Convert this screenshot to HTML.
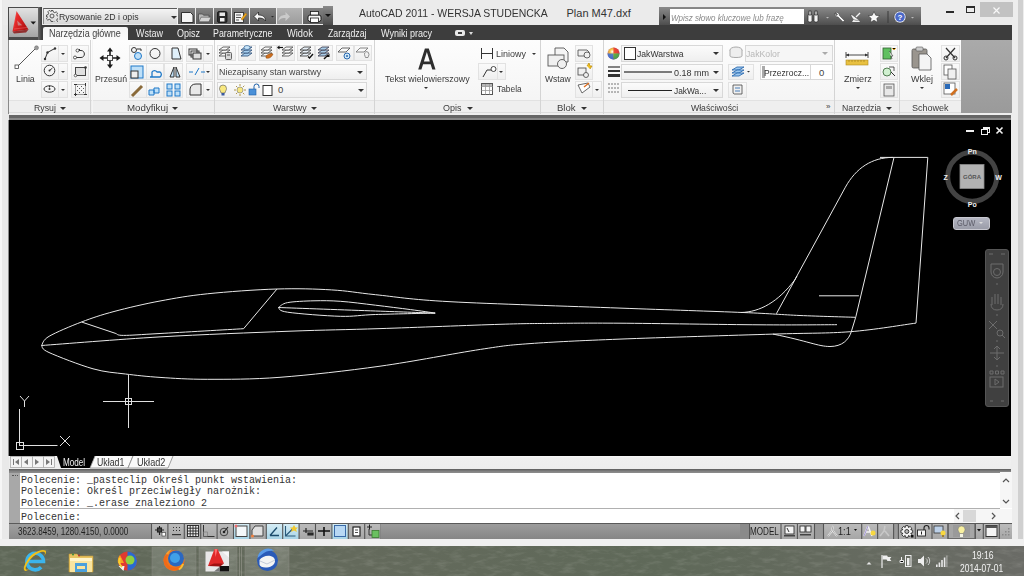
<!DOCTYPE html>
<html><head><meta charset="utf-8">
<style>
*{box-sizing:border-box}
html,body{margin:0;padding:0}
body{width:1024px;height:576px;overflow:hidden;position:relative;background:#ebebeb;font-family:"Liberation Sans",sans-serif;color:#333}
.a{position:absolute}
.t{position:absolute;white-space:pre;font-size:10px;letter-spacing:-0.5px;color:#3b3b3b;line-height:12px}
.btn{position:absolute;border:1px solid #e2e2e2;background:linear-gradient(#fafafa,#efefef)}
.dd{position:absolute;border:1px solid #d8d8d8;background:linear-gradient(#fbfbfb,#efefef)}
.arr{position:absolute;width:0;height:0;border-left:3px solid transparent;border-right:3px solid transparent;border-top:3px solid #333}
.ptitle{position:absolute;top:100px;height:12px;background:#efefef;border-top:1px solid #e2e2e2}
.psep{position:absolute;top:40px;height:74px;width:1px;background:#d4d4d4}
.sb{position:absolute;top:523px;height:16px;width:16px;border-left:1px solid #8c8c8c;border-right:1px solid #d0d0d0}
</style></head><body>

<!-- left strip -->
<div class="a" style="left:0;top:0;width:2px;height:545px;background:#f6f6f6"></div>
<div class="a" style="left:2px;top:0;width:7px;height:545px;background:#e9e9e9"></div>
<div class="a" style="left:8px;top:120px;width:1px;height:336px;background:#8a8a8a"></div>
<div class="a" style="left:8px;top:40px;width:1px;height:74px;background:#8a8a8a"></div>
<!-- right strip -->
<div class="a" style="left:1011px;top:0;width:13px;height:545px;background:#ededed"></div>
<div class="a" style="left:1018px;top:0;width:5px;height:545px;background:#d0d0d0"></div>

<!-- top title area -->
<div class="a" style="left:3px;top:0;width:1009px;height:25px;background:#ebebeb"></div>

<!-- tab row -->
<div class="a" style="left:9px;top:25px;width:1003px;height:15px;background:#3d3d3d"></div>
<div class="a" style="left:43px;top:27px;width:85px;height:14px;background:linear-gradient(#f4f4f4,#fbfbfb);border-radius:2px 2px 0 0"></div>
<div class="t" style="left:48.90px;top:29.24px;font-size:10px;line-height:10px;letter-spacing:0;transform:scaleX(0.903);transform-origin:0 0;color:#444">Narzędzia główne</div>
<div class="t" style="left:135.50px;top:29.24px;font-size:10px;line-height:10px;letter-spacing:0;transform:scaleX(0.900);transform-origin:0 0;color:#f0f0f0">Wstaw</div>
<div class="t" style="left:176.60px;top:29.24px;font-size:10px;line-height:10px;letter-spacing:0;transform:scaleX(0.896);transform-origin:0 0;color:#f0f0f0">Opisz</div>
<div class="t" style="left:213.32px;top:29.24px;font-size:10px;line-height:10px;letter-spacing:0;transform:scaleX(0.883);transform-origin:0 0;color:#f0f0f0">Parametryczne</div>
<div class="t" style="left:287.00px;top:29.24px;font-size:10px;line-height:10px;letter-spacing:0;transform:scaleX(0.929);transform-origin:0 0;color:#f0f0f0">Widok</div>
<div class="t" style="left:327.70px;top:29.24px;font-size:10px;line-height:10px;letter-spacing:0;transform:scaleX(0.877);transform-origin:0 0;color:#f0f0f0">Zarządzaj</div>
<div class="t" style="left:380.50px;top:29.24px;font-size:10px;line-height:10px;letter-spacing:0;transform:scaleX(0.902);transform-origin:0 0;color:#f0f0f0">Wyniki pracy</div>
<div class="a" style="left:455px;top:30px;width:10px;height:6px;background:#e8e8e8;border-radius:2px"></div>
<div class="a" style="left:458px;top:32px;width:4px;height:2px;background:#3d3d3d"></div>
<div class="arr" style="left:469px;top:32px;border-top-color:#ddd;border-left-width:2px;border-right-width:2px"></div>

<!-- app button -->
<div class="a" style="left:8px;top:7px;width:34px;height:33px;background:#4a4a4a"></div>
<div class="a" style="left:38px;top:7px;width:4px;height:33px;background:linear-gradient(90deg,#6a6a6a,#3a3a3a)"></div>
<div class="a" style="left:9px;top:8px;width:29px;height:29px;background:linear-gradient(#e2e2e2,#c8c8c8 45%,#a4a4a4 100%)"></div>
<svg class="a" style="left:9px;top:8px" width="29" height="29" viewBox="0 0 29 29">
 <defs><linearGradient id="ra" x1="0" y1="0" x2="1" y2="0.6"><stop offset="0" stop-color="#f07070"/><stop offset="0.35" stop-color="#e82a2a"/><stop offset="1" stop-color="#b01010"/></linearGradient></defs>
 <path d="M3.5 23.5 L7.5 3 L19.5 21.5 Z" fill="url(#ra)"/>
 <path d="M3.5 23.5 L19.5 21.5 L17 24.5 L5 25.5 Z" fill="#8a1010" opacity=".8"/>
 <path d="M8.2 12.5 L8.9 17.6 L13.2 17.2 Z" fill="#c8c8c8" opacity=".55"/><path d="M5 21 L18 19.5" stroke="#ff8080" stroke-width="0.8" opacity=".5"/>
 <path d="M4.5 22 L7.5 3.5 L6 14 Z" fill="#ffb0b0" opacity=".6"/>
 <path d="M21.5 13.5h5.5l-2.75 3z" fill="#1a1a1a"/>
</svg>

<!-- QAT -->
<div class="a" style="left:43px;top:8px;width:134px;height:16px;background:linear-gradient(#f4f4f4,#d6d6d6);border-top:1px solid #5a5a5a;border-left:1px solid #8a8a8a"></div>
<svg class="a" style="left:46px;top:10px" width="12" height="12" viewBox="0 0 12 12"><g fill="none" stroke="#555" stroke-width="1"><circle cx="6" cy="6" r="2"/><path d="M5 0.5h2l.4 1.6 1.4.6 1.4-.9 1.4 1.4-.9 1.4.6 1.4 1.6.4v2l-1.6.4-.6 1.4.9 1.4-1.4 1.4-1.4-.9-1.4.6L7 11.5H5l-.4-1.6-1.4-.6-1.4.9-1.4-1.4.9-1.4-.6-1.4L.5 7V5l1.6-.4.6-1.4-.9-1.4 1.4-1.4 1.4.9 1.4-.6z"/></g></svg>
<div class="t" style="left:58.58px;top:11.96px;font-size:9.5px;line-height:9.5px;letter-spacing:0;transform:scaleX(0.924);transform-origin:0 0;color:#333">Rysowanie 2D i opis</div>
<div class="arr" style="left:171px;top:16px;border-width:3px 3px 0 3px;border-top-color:#333"></div>
<div class="a" style="left:177px;top:8px;width:1px;height:17px;background:#f4f4f4"></div>
<div class="a" style="left:178px;top:8px;width:17px;height:16px;background:linear-gradient(#828282,#5e5e5e)"></div>
<div class="a" style="left:196px;top:8px;width:17px;height:16px;background:linear-gradient(#828282,#5e5e5e)"></div>
<div class="a" style="left:214px;top:8px;width:17px;height:16px;background:linear-gradient(#828282,#5e5e5e)"></div>
<div class="a" style="left:232px;top:8px;width:17px;height:16px;background:linear-gradient(#828282,#5e5e5e)"></div>
<div class="a" style="left:250px;top:8px;width:26px;height:16px;background:linear-gradient(#828282,#5e5e5e)"></div>
<div class="a" style="left:277px;top:8px;width:25px;height:16px;background:linear-gradient(#b4b4b4,#9c9c9c)"></div>
<div class="a" style="left:303px;top:8px;width:20px;height:16px;background:linear-gradient(#828282,#5e5e5e)"></div>
<div class="a" style="left:323px;top:6px;width:10px;height:19px;background:linear-gradient(#8a8a8a,#4a4a4a)"></div>
<div class="arr" style="left:325px;top:14px;border-width:3px 3px 0 3px;border-top-color:#111"></div>
<!-- QAT icons -->
<svg class="a" style="left:178px;top:8px" width="160" height="17" viewBox="0 0 160 17">
 <!-- new -->
 <path d="M3.5 4.5h9l2.5 2.5v7.5H3.5z" fill="#f6f6f6" stroke="#222" stroke-width="0.9"/>
 <!-- open -->
 <path d="M20.5 6h4l1 1.2h5.5v6.5H20.5z" fill="#b8b8b8" stroke="#444" stroke-width="0.7"/>
 <path d="M21 13.7l2-4.5h10l-2 4.5z" fill="#d4d4d4" stroke="#555" stroke-width="0.6"/>
 <!-- save -->
 <rect x="39.5" y="3.5" width="9.5" height="11" rx="1.5" fill="#2a2a2a" stroke="#111" stroke-width="0.8"/>
 <rect x="41.5" y="4.5" width="5.5" height="3.5" fill="#e8e8e8"/>
 <rect x="42" y="10" width="4.5" height="3.5" fill="#f0f0f0"/>
 <!-- saveas -->
 <rect x="56.5" y="4.5" width="9" height="10" fill="#f4f4f4" stroke="#222" stroke-width="0.8"/>
 <path d="M58 7h5M58 9.5h5M58 12h3" stroke="#444" stroke-width="0.9"/>
 <path d="M63 11l4.5-6 1.5 1.2-4.5 6z" fill="#f0a818" stroke="#8a5a10" stroke-width="0.4"/>
 <!-- undo -->
 <path d="M76 8.5 l4.5-4.5 v3 c4.5 0 7 2 7 6 c-1.5-2.5-4-3-7-3 v3z" fill="#f8f8f8" stroke="#1a1a1a" stroke-width="0.7"/>
 <path d="M93 8h3l-1.5 1.6z" fill="#2a2a2a"/>
 <!-- redo disabled -->
 <path d="M112 8.5 l-4.5-4.5 v3 c-4.5 0-7 2-7 6 c1.5-2.5 4-3 7-3 v3z" fill="#cacaca"/>
 <path d="M118 8h3l-1.5 1.6z" fill="#a8a8a8"/>
 <!-- print -->
 <rect x="130" y="7" width="13" height="6.5" rx="2" fill="#f6f6f6" stroke="#1a1a1a" stroke-width="1"/>
 <rect x="132.5" y="3.5" width="8" height="3.5" fill="#f6f6f6" stroke="#1a1a1a" stroke-width="0.8"/>
 <rect x="132.5" y="10" width="8" height="4.5" fill="#fff" stroke="#1a1a1a" stroke-width="0.8"/>
</svg>

<!-- title -->
<div class="t" style="left:359.00px;top:8.29px;font-size:11px;line-height:11px;letter-spacing:0;transform:scaleX(0.951);transform-origin:0 0;color:#333">AutoCAD 2011 - WERSJA STUDENCKA</div>
<div class="t" style="left:566.50px;top:8.29px;font-size:11px;line-height:11px;letter-spacing:0;color:#333">Plan M47.dxf</div>

<!-- search bar -->
<div class="a" style="left:659px;top:7px;width:262px;height:18px;background:linear-gradient(#8a8a8a,#4e4e4e)"></div>
<div class="arr" style="left:663px;top:14px;border-top:3px solid transparent;border-bottom:3px solid transparent;border-left:3px solid #111;border-right:0"></div>
<div class="a" style="left:670px;top:9px;width:134px;height:15px;background:#fff"></div>
<div class="t" style="left:670.76px;top:12.96px;font-size:9.5px;line-height:9.5px;letter-spacing:0;transform:scaleX(0.844);transform-origin:0 0;font-style:italic;color:#8a8a8a">Wpisz słowo kluczowe lub frazę</div>
<svg class="a" style="left:804px;top:8px" width="117" height="18" viewBox="0 0 117 18">
 <!-- binoculars -->
 <g fill="#f4f4f4" stroke="#222" stroke-width="0.7"><rect x="4" y="6" width="4" height="8" rx="1.5"/><rect x="10" y="6" width="4" height="8" rx="1.5"/><rect x="5" y="3" width="2" height="4"/><rect x="11" y="3" width="2" height="4"/></g>
 <path d="M22 9h3l-1.5 1.5z" fill="#bbb"/>
 <!-- wrench -->
 <path d="M31 5 a3 3 0 0 0 3 4 l5 5 1.5-1.5-5-5 a3 3 0 0 0-4-3 l2 2-1 1z" fill="#f4f4f4" stroke="#333" stroke-width="0.5"/>
 <!-- satellite -->
 <path d="M48 14h8l-2-3h-4z" fill="#f0f0f0"/>
 <path d="M47 6a6 6 0 0 0 8 6z" fill="#f4f4f4" stroke="#333" stroke-width="0.5"/>
 <path d="M52 9l4-4" stroke="#f4f4f4" stroke-width="1.2"/>
 <!-- star -->
 <path d="M70 3.5l1.8 3.8 4 .4-3 2.7.9 4-3.7-2.1-3.7 2.1.9-4-3-2.7 4-.4z" fill="#f8f8f8" stroke="#333" stroke-width="0.6"/>
 <path d="M84 3v12" stroke="#3a3a3a"/>
 <!-- help -->
 <circle cx="96" cy="9" r="6" fill="#f4f4f4" stroke="#333" stroke-width="0.5"/>
 <circle cx="96" cy="9" r="4.8" fill="#4a68c8"/>
 <text x="96" y="12" font-size="8" font-weight="bold" text-anchor="middle" fill="#fff" font-family="Liberation Sans">?</text>
 <path d="M107 9h3l-1.5 1.5z" fill="#bbb"/>
</svg>

<!-- window controls -->
<div class="a" style="left:946px;top:11px;width:8px;height:2px;background:#2a2a2a"></div>
<div class="a" style="left:966px;top:6px;width:9px;height:7px;border:1px solid #2a2a2a;border-top-width:2px"></div>
<div class="a" style="left:980px;top:2px;width:33px;height:15px;background:#c2c2c2"></div>
<svg class="a" style="left:992px;top:6px" width="9" height="9" viewBox="0 0 9 9"><path d="M1.5 1.5L7.5 7.5M7.5 1.5L1.5 7.5" stroke="#f8f8f8" stroke-width="1.2"/></svg>

<!-- ribbon body -->
<div class="a" style="left:9px;top:40px;width:952px;height:74px;background:linear-gradient(#fdfdfd,#f3f3f3)"></div>
<div class="a" style="left:961px;top:40px;width:51px;height:74px;background:linear-gradient(#aaaaaa,#9a9a9a)"></div>
<div class="a" style="left:9px;top:112px;width:952px;height:1px;background:#dcdcdc"></div>
<div class="a" style="left:9px;top:113px;width:1003px;height:2px;background:#eeeeee"></div>
<!-- panel title bars -->
<div class="ptitle" style="left:9px;width:952px"></div>
<div class="psep" style="left:90px"></div><div class="psep" style="left:92px;background:#f4f4f4"></div>
<div class="psep" style="left:214px"></div>
<div class="psep" style="left:374px"></div>
<div class="psep" style="left:540px"></div>
<div class="psep" style="left:603px"></div>
<div class="psep" style="left:834px"></div>
<div class="psep" style="left:899px"></div>
<div class="t" style="left:34.08px;top:102.56px;font-size:9.5px;line-height:9.5px;letter-spacing:0;transform:scaleX(0.923);transform-origin:0 0">Rysuj</div><div class="arr" style="left:60px;top:107px"></div>
<div class="t" style="left:126.68px;top:102.56px;font-size:9.5px;line-height:9.5px;letter-spacing:0;transform:scaleX(1.023);transform-origin:0 0">Modyfikuj</div><div class="arr" style="left:172px;top:107px"></div>
<div class="t" style="left:272.80px;top:102.56px;font-size:9.5px;line-height:9.5px;letter-spacing:0;transform:scaleX(0.931);transform-origin:0 0">Warstwy</div><div class="arr" style="left:311px;top:107px"></div>
<div class="t" style="left:443.00px;top:102.56px;font-size:9.5px;line-height:9.5px;letter-spacing:0;transform:scaleX(0.942);transform-origin:0 0">Opis</div><div class="arr" style="left:467px;top:107px"></div>
<div class="t" style="left:557.49px;top:102.56px;font-size:9.5px;line-height:9.5px;letter-spacing:0;transform:scaleX(1.006);transform-origin:0 0">Blok</div><div class="arr" style="left:581px;top:107px"></div>
<div class="t" style="left:691.40px;top:102.56px;font-size:9.5px;line-height:9.5px;letter-spacing:0;transform:scaleX(0.914);transform-origin:0 0">Właściwości</div>
<div class="t" style="left:826px;top:101px;font-size:8px;letter-spacing:0">»</div>
<div class="t" style="left:842.08px;top:102.56px;font-size:9.5px;line-height:9.5px;letter-spacing:0;transform:scaleX(0.917);transform-origin:0 0">Narzędzia</div><div class="arr" style="left:886px;top:107px"></div>
<div class="t" style="left:912.35px;top:102.56px;font-size:9.5px;line-height:9.5px;letter-spacing:0;transform:scaleX(0.949);transform-origin:0 0">Schowek</div>

<!-- ===== Rysuj ===== -->
<svg class="a" style="left:14px;top:45px" width="26" height="25" viewBox="0 0 26 25"><path d="M3 22L22 3" stroke="#555" stroke-width="1"/><rect x="1" y="20" width="3.5" height="3.5" fill="#fff" stroke="#444" stroke-width="0.8"/><circle cx="22.5" cy="2.8" r="2" fill="#999" stroke="#666" stroke-width="0.5"/></svg>
<div class="t" style="left:16.26px;top:74.46px;font-size:9.5px;line-height:9.5px;letter-spacing:0;transform:scaleX(0.937);transform-origin:0 0">Linia</div>
<div class="btn" style="left:41px;top:45px;width:18px;height:17px"></div><div class="btn" style="left:58px;top:45px;width:10px;height:17px"></div>
<div class="btn" style="left:41px;top:63px;width:18px;height:17px"></div><div class="btn" style="left:58px;top:63px;width:10px;height:17px"></div>
<div class="btn" style="left:41px;top:81px;width:18px;height:17px"></div><div class="btn" style="left:58px;top:81px;width:10px;height:17px"></div>
<div class="btn" style="left:71px;top:45px;width:18px;height:17px"></div>
<div class="btn" style="left:71px;top:63px;width:18px;height:17px"></div>
<div class="btn" style="left:71px;top:81px;width:18px;height:17px"></div>
<div class="arr" style="left:61px;top:53px;border-width:2px 2px 0 2px"></div>
<div class="arr" style="left:61px;top:71px;border-width:2px 2px 0 2px"></div>
<div class="arr" style="left:61px;top:89px;border-width:2px 2px 0 2px"></div>
<svg class="a" style="left:41px;top:45px" width="50" height="53" viewBox="0 0 50 53">
 <g fill="none" stroke="#333" stroke-width="1">
 <path d="M4 14 L6.5 7.5 L11 5 L14 3.5"/>
 <circle cx="8.5" cy="25.5" r="5.3"/><path d="M8.5 25.5l3-2.5"/>
 <ellipse cx="8.5" cy="44" rx="5.5" ry="3.2"/><path d="M8.5 40.5v2"/>
 <path d="M35 12.5 H40 C44.5 12.5 44.5 5.5 40 5.5 H37.5"/><path d="M37.5 5.5 l1.5-1.5"/>
 <rect x="34.5" y="22.5" width="10" height="8" fill="#e0e0e0" stroke="#444"/>
 <rect x="34.5" y="39.5" width="10" height="10" fill="none" stroke="#444" stroke-dasharray="1 1"/>
 </g>
 <g fill="#333"><circle cx="4" cy="14" r="1.2"/><circle cx="6.5" cy="7.5" r="1.2"/><circle cx="14" cy="3.5" r="1.2"/><circle cx="8.5" cy="25.5" r="1"/><circle cx="8.5" cy="44" r="1"/>
 <circle cx="34" cy="12.5" r="1.5" fill="#fff" stroke="#333" stroke-width="0.8"/><circle cx="36.5" cy="5.5" r="1.5" fill="#fff" stroke="#333" stroke-width="0.8"/>
 <circle cx="34.5" cy="30.5" r="1.3" fill="#fff" stroke="#333" stroke-width="0.7"/><circle cx="44.5" cy="22.5" r="1.3" fill="#333"/>
 <path d="M36 41h1v1h-1zM38 43h1v1h-1zM40 41h1v1h-1zM42 43h1v1h-1zM36 45h1v1h-1zM40 45h1v1h-1zM38 47h1v1h-1zM42 47h1v1h-1z" fill="#555"/>
 <path d="M33 49.5h3M43 49.5h3M33 39.5h3M44.5 38v3M34.5 48v3" stroke="#333" stroke-width="1"/>
 </g>
</svg>

<!-- ===== Modyfikuj ===== -->
<svg class="a" style="left:99px;top:47px" width="22" height="22" viewBox="0 0 22 22">
 <g fill="#1a1a1a"><path d="M11 0.5l3 4h-6z"/><path d="M11 21.5l3-4h-6z"/><path d="M0.5 11l4-3v6z"/><path d="M21.5 11l-4-3v6z"/></g>
 <path d="M11 4v4M11 14v4M4 11h4M14 11h4" stroke="#1a1a1a" stroke-width="1.6"/>
 <rect x="8.5" y="8.5" width="5" height="5" fill="#f4f4f4" stroke="#333" stroke-width="0.9"/>
</svg>
<div class="t" style="left:94.78px;top:74.46px;font-size:9.5px;line-height:9.5px;letter-spacing:0;transform:scaleX(0.918);transform-origin:0 0">Przesuń</div>
<div class="btn" style="left:129px;top:45px;width:18px;height:17px"></div><div class="btn" style="left:146px;top:45px;width:18px;height:17px"></div><div class="btn" style="left:164px;top:45px;width:19px;height:17px"></div>
<div class="btn" style="left:129px;top:63px;width:18px;height:17px"></div><div class="btn" style="left:146px;top:63px;width:18px;height:17px"></div><div class="btn" style="left:164px;top:63px;width:19px;height:17px"></div>
<div class="btn" style="left:129px;top:81px;width:18px;height:17px"></div><div class="btn" style="left:146px;top:81px;width:18px;height:17px"></div><div class="btn" style="left:164px;top:81px;width:19px;height:17px"></div>
<div class="btn" style="left:186px;top:45px;width:18px;height:17px"></div><div class="btn" style="left:203px;top:45px;width:10px;height:17px"></div>
<div class="btn" style="left:186px;top:63px;width:18px;height:17px"></div><div class="btn" style="left:203px;top:63px;width:10px;height:17px"></div>
<div class="btn" style="left:186px;top:81px;width:18px;height:17px"></div><div class="btn" style="left:203px;top:81px;width:10px;height:17px"></div>
<div class="arr" style="left:206px;top:53px;border-width:2px 2px 0 2px"></div>
<div class="arr" style="left:206px;top:71px;border-width:2px 2px 0 2px"></div>
<div class="arr" style="left:206px;top:89px;border-width:2px 2px 0 2px"></div>
<svg class="a" style="left:129px;top:45px" width="80" height="53" viewBox="0 0 80 53">
 <g fill="none" stroke-width="1">
 <circle cx="5" cy="5" r="2.5" stroke="#333"/><circle cx="9" cy="11" r="3.5" stroke="#1e78c8" fill="#bfe0f8"/><path d="M8 4h4v2" stroke="#333"/>
 <circle cx="26" cy="8.5" r="5" stroke="#333"/>
 <path d="M43 3h6l3 11h-9z" stroke="#333" fill="#e0f0fa"/>
 <rect x="2" y="21" width="12" height="12" stroke="#1e78c8" fill="#bfe0f8"/><rect x="2" y="26" width="7" height="7" stroke="#333" fill="#eee"/>
 <path d="M21 32h10a3 3 0 0 0 0-5h-3a3 3 0 0 0-5 0v5" stroke="#1e78c8" stroke-width="1.3"/>
 <path d="M41 32l4-10v10z M47 22l4 10h-4z" stroke="#333" fill="#bfe0f8"/>
 <path d="M3 51l10-10" stroke="#8a6a3a" stroke-width="3"/>
 <path d="M20 45h5v5h-5zM25 43h5v5h-5z" stroke="#1e78c8" fill="#bfe0f8"/>
 <rect x="38" y="39" width="5" height="5" stroke="#1e78c8" fill="#bfe0f8"/><rect x="46" y="39" width="5" height="5" stroke="#1e78c8" fill="#bfe0f8"/><rect x="38" y="46" width="5" height="5" stroke="#1e78c8" fill="#bfe0f8"/><rect x="46" y="46" width="5" height="5" stroke="#1e78c8" fill="#bfe0f8"/>
 <rect x="60" y="4" width="8" height="6" stroke="#333"/><rect x="62" y="6" width="8" height="6" stroke="#333"/><rect x="64" y="8" width="8" height="6" stroke="#333" fill="#ddd"/>
 <path d="M60 27h4M66 30l4-7M72 27h4" stroke="#1e78c8"/>
 <path d="M61 50v-6a6 6 0 0 1 6-5h5v11z" stroke="#333" fill="#e8e8e8"/>
 </g>
</svg>

<!-- ===== Warstwy ===== -->
<div class="btn" style="left:217px;top:45px;width:19px;height:16px"></div>
<div class="btn" style="left:238px;top:45px;width:18px;height:16px"></div>
<div class="btn" style="left:259px;top:45px;width:18px;height:16px"></div><div class="btn" style="left:277px;top:45px;width:18px;height:16px"></div>
<div class="btn" style="left:297px;top:45px;width:18px;height:16px"></div><div class="btn" style="left:315px;top:45px;width:18px;height:16px"></div>
<div class="btn" style="left:336px;top:45px;width:18px;height:16px"></div><div class="btn" style="left:354px;top:45px;width:18px;height:16px"></div>
<svg class="a" style="left:216px;top:44px" width="160" height="17" viewBox="0 0 160 17"><path d="M3,12 L7,9 H14 L10,12 Z" fill="#fafafa" stroke="#555" stroke-width="0.9"/><path d="M3,9 L7,6 H14 L10,9 Z" fill="#fafafa" stroke="#555" stroke-width="0.9"/><path d="M3,6 L7,3 H14 L10,6 Z" fill="#fafafa" stroke="#555" stroke-width="0.9"/><rect x="9.5" y="8.5" width="6" height="7" rx="1" fill="#d8d8d8" stroke="#555" stroke-width="0.9"/><path d="M11 11h3" stroke="#555"/><path d="M25,12 L29,9 H36 L32,12 Z" fill="#a8d0f0" stroke="#3a5a80" stroke-width="0.9"/><path d="M25,9 L29,6 H36 L32,9 Z" fill="#a8d0f0" stroke="#3a5a80" stroke-width="0.9"/><path d="M25,6 L29,3 H36 L32,6 Z" fill="#a8d0f0" stroke="#3a5a80" stroke-width="0.9"/><ellipse cx="31" cy="3.5" rx="3" ry="2" fill="#c8e4f8" stroke="#3a6a9a" stroke-width="0.7"/><path d="M45,12 L49,9 H56 L52,12 Z" fill="#fafafa" stroke="#555" stroke-width="0.9"/><path d="M45,9 L49,6 H56 L52,9 Z" fill="#fafafa" stroke="#555" stroke-width="0.9"/><path d="M45,6 L49,3 H56 L52,6 Z" fill="#fafafa" stroke="#555" stroke-width="0.9"/><path d="M50 12 c2-2 5-3 7-2 c-1 3-4 5-7 4z" fill="#d07020" stroke="#8a4a10" stroke-width="0.5"/><path d="M66,12 L70,9 H77 L73,12 Z" fill="#fafafa" stroke="#555" stroke-width="0.9"/><path d="M66,9 L70,6 H77 L73,9 Z" fill="#fafafa" stroke="#555" stroke-width="0.9"/><path d="M66,6 L70,3 H77 L73,6 Z" fill="#fafafa" stroke="#555" stroke-width="0.9"/><path d="M62 3.5h5" stroke="#111" stroke-width="1.2"/><path d="M61 3.5l2.5-2v4z" fill="#111"/><path d="M84,12 L88,9 H95 L91,12 Z" fill="#e8f0f8" stroke="#444" stroke-width="0.9"/><path d="M84,9 L88,6 H95 L91,9 Z" fill="#e8f0f8" stroke="#444" stroke-width="0.9"/><path d="M84,6 L88,3 H95 L91,6 Z" fill="#e8f0f8" stroke="#444" stroke-width="0.9"/><path d="M92 12.5l1.5 1.5 3.5-4" fill="none" stroke="#111" stroke-width="1.4"/><path d="M102,12 L106,9 H113 L109,12 Z" fill="#a8cce8" stroke="#445" stroke-width="0.9"/><path d="M102,9 L106,6 H113 L109,9 Z" fill="#a8cce8" stroke="#445" stroke-width="0.9"/><path d="M102,6 L106,3 H113 L109,6 Z" fill="#a8cce8" stroke="#445" stroke-width="0.9"/><path d="M108 15l4-4" stroke="#111" stroke-width="1.4"/><path d="M113.5 9.5v3.5h-3.5z" fill="#111"/><path d="M122,8 L126,4 H134 L130,8 Z" fill="#fafafa" stroke="#555" stroke-width="0.9"/><circle cx="131" cy="12" r="3" fill="#d0e8f8" stroke="#2a6ab0" stroke-width="1"/><circle cx="131" cy="12" r="1" fill="#2a6ab0"/><path d="M140,8 L144,4 H152 L148,8 Z" fill="#fafafa" stroke="#777" stroke-width="0.9"/><path d="M150 7.5a3 3 0 0 1 3 3c0 1.5-1 2-1 3h-2.5c0-1-1-1.5-1-3a3 3 0 0 1 1.5-3z" fill="#f0f0f0" stroke="#777" stroke-width="0.8"/></svg>
<div class="dd" style="left:217px;top:64px;width:150px;height:16px"></div>
<div class="t" style="left:218.67px;top:67.46px;font-size:9.5px;line-height:9.5px;letter-spacing:0;transform:scaleX(0.934);transform-origin:0 0;color:#444">Niezapisany stan warstwy</div>
<div class="arr" style="left:357px;top:71px;border-width:3px 3.5px 0 3.5px"></div>
<div class="dd" style="left:217px;top:82px;width:150px;height:16px"></div>
<svg class="a" style="left:219px;top:83px" width="70" height="14" viewBox="0 0 70 14">
 <path d="M4 2a3.5 3.5 0 0 1 3.5 3.5c0 2-1.5 3-1.5 4.5h-4c0-1.5-1.5-2.5-1.5-4.5A3.5 3.5 0 0 1 4 2z" fill="#f8e880" stroke="#555" stroke-width="0.6"/><rect x="2.5" y="10" width="3" height="2.5" fill="#3a5aa0"/>
 <circle cx="21" cy="7" r="3" fill="#f8e880" stroke="#777" stroke-width="0.6"/><path d="M21 1v2M21 11v2M15 7h2M25 7h2M17 3l1.3 1.3M24 10l1.3 1.3M17 11l1.3-1.3M24 4l1.3-1.3" stroke="#a08020" stroke-width="0.8"/>
 <rect x="30" y="6" width="7" height="6" fill="#4a90d8" stroke="#1e60a8" stroke-width="0.6"/><path d="M35 6V3.5a2.5 2.5 0 0 1 5 0V5" fill="none" stroke="#1e60a8" stroke-width="1"/>
 <rect x="44" y="2.5" width="9" height="10" fill="#fff" stroke="#333" stroke-width="1"/>
</svg>
<div class="t" style="left:278.00px;top:85.46px;font-size:9.5px;line-height:9.5px;letter-spacing:0;color:#444">0</div>
<div class="arr" style="left:358px;top:89px;border-width:3px 3.5px 0 3.5px"></div>

<!-- ===== Opis ===== -->
<svg class="a" style="left:410px;top:44px" width="32" height="30" viewBox="410 44 32 30"><path d="M418.2,69.6 L424.9,48.5 L428.8,48.5 L435.5,69.6 L432.3,69.6 L430.6,64.3 L423.1,64.3 L421.4,69.6 Z M423.9,61.4 L429.8,61.4 L426.85,51.9 Z" fill="#2e2e2e" fill-rule="evenodd"/></svg>
<div class="t" style="left:384.50px;top:74.46px;font-size:9.5px;line-height:9.5px;letter-spacing:0;transform:scaleX(0.937);transform-origin:0 0">Tekst wielowierszowy</div>
<div class="arr" style="left:424px;top:87px;border-width:2px 2px 0 2px"></div>
<svg class="a" style="left:480px;top:47px" width="20" height="50" viewBox="0 0 20 50"><path d="M1.5 1v11M12.5 1v11M1.5 6.5h11" stroke="#333" stroke-width="1" fill="none"/><rect x="1.5" y="36.5" width="11" height="11" fill="#fff" stroke="#555" stroke-width="1"/><rect x="2" y="37" width="10" height="2.5" fill="#b8b8b8"/><path d="M1.5 39.5h11M1.5 43.5h11M5.5 37v10.5M9.5 37v10.5" stroke="#999" stroke-width="0.8"/></svg>
<div class="t" style="left:495.95px;top:48.66px;font-size:9.5px;line-height:9.5px;letter-spacing:0;transform:scaleX(0.945);transform-origin:0 0">Liniowy</div>
<div class="arr" style="left:532px;top:53px;border-width:2px 2px 0 2px"></div>
<div class="btn" style="left:478px;top:63px;width:20px;height:17px"></div><div class="btn" style="left:497px;top:63px;width:9px;height:17px"></div>
<svg class="a" style="left:480px;top:64px" width="18" height="15" viewBox="0 0 18 15"><path d="M3 13l4-7h4" fill="none" stroke="#333" stroke-width="1"/><circle cx="13.5" cy="5" r="2.5" fill="#fff" stroke="#333" stroke-width="0.9"/></svg>
<div class="arr" style="left:499px;top:71px;border-width:2px 2px 0 2px"></div>
<div class="t" style="left:497.30px;top:84.06px;font-size:9.5px;line-height:9.5px;letter-spacing:0;transform:scaleX(0.882);transform-origin:0 0">Tabela</div>

<!-- ===== Blok ===== -->
<svg class="a" style="left:546px;top:46px" width="26" height="24" viewBox="0 0 26 24"><path d="M9 2h9l4 4v10H9z" fill="#f4f4f4" stroke="#555" stroke-width="0.9"/><rect x="2" y="9" width="16" height="11" fill="#f0f0f0" stroke="#555" stroke-width="0.9"/><circle cx="16" cy="18" r="4.5" fill="#f0f0f0" stroke="#555" stroke-width="0.9"/></svg>
<div class="t" style="left:545.00px;top:74.46px;font-size:9.5px;line-height:9.5px;letter-spacing:0;transform:scaleX(0.897);transform-origin:0 0">Wstaw</div>
<div class="btn" style="left:575px;top:45px;width:18px;height:17px"></div>
<div class="btn" style="left:575px;top:63px;width:18px;height:17px"></div>
<div class="btn" style="left:575px;top:81px;width:18px;height:17px"></div><div class="btn" style="left:592px;top:81px;width:10px;height:17px"></div>
<div class="arr" style="left:595px;top:89px;border-width:2px 2px 0 2px"></div>
<svg class="a" style="left:575px;top:45px" width="18" height="53" viewBox="0 0 18 53">
 <g fill="#f0f0f0" stroke="#444" stroke-width="0.8"><path d="M3 5h9l2 2v4H3z"/><circle cx="12" cy="10" r="3"/>
 <rect x="3" y="23" width="8" height="7"/><circle cx="11" cy="30" r="2.5"/><path d="M12 21l2-3 1 3 2 0-2 3" fill="#f0c020" stroke="#c09010"/>
 <path d="M3 40l4 8 8-6-2-4z" fill="#fff"/><path d="M9 42l5-4" stroke="#e07020" stroke-width="1.5"/></g>
</svg>

<!-- ===== Properties ===== -->
<svg class="a" style="left:607px;top:47px" width="14" height="13" viewBox="0 0 14 13"><defs><radialGradient id="cw" cx="0.4" cy="0.35" r="0.7"><stop offset="0" stop-color="#fff"/><stop offset="0.3" stop-color="#f8c040"/><stop offset="1" stop-color="#8030a0"/></radialGradient></defs><circle cx="6.5" cy="6.5" r="6" fill="url(#cw)"/><path d="M6.5 .5a6 6 0 0 1 6 6h-6z" fill="#e83030" opacity=".8"/><path d="M.5 6.5a6 6 0 0 0 6 6v-6z" fill="#3070e0" opacity=".8"/><path d="M12.5 6.5a6 6 0 0 1-6 6v-6z" fill="#40b040" opacity=".8"/></svg>
<div class="dd" style="left:621px;top:45px;width:102px;height:17px"></div>
<div class="a" style="left:624px;top:47px;width:12px;height:13px;background:#fff;border:1px solid #333"></div>
<div class="t" style="left:637.20px;top:48.76px;font-size:9.5px;line-height:9.5px;letter-spacing:0;transform:scaleX(0.906);transform-origin:0 0;color:#333">JakWarstwa</div>
<div class="arr" style="left:713px;top:52px;border-width:3px 3px 0 3px"></div>
<svg class="a" style="left:729px;top:46px" width="16" height="15" viewBox="0 0 16 15"><g fill="#eee" stroke="#aaa" stroke-width="1"><ellipse cx="7" cy="4" rx="6" ry="3"/><path d="M1 4v6c0 2 12 2 12 0V4"/></g></svg>
<div class="dd" style="left:745px;top:45px;width:88px;height:17px;background:#f6f6f6"></div>
<div class="t" style="left:745.80px;top:48.76px;font-size:9.5px;line-height:9.5px;letter-spacing:0;transform:scaleX(0.914);transform-origin:0 0;color:#b8b8b8">JakKolor</div>
<div class="arr" style="left:822px;top:52px;border-width:3px 3px 0 3px;border-top-color:#aaa"></div>
<svg class="a" style="left:607px;top:65px" width="14" height="33" viewBox="0 0 14 33"><path d="M1 2h12" stroke="#333" stroke-width="1.2"/><path d="M1 6h12" stroke="#333" stroke-width="2"/><path d="M1 10.5h12" stroke="#333" stroke-width="3"/>
 <path d="M1 19h12M1 23h12M1 27h12" stroke="#555" stroke-width="0.8" stroke-dasharray="2 1"/></svg>
<div class="dd" style="left:621px;top:64px;width:102px;height:16px"></div>
<div class="a" style="left:624px;top:71px;width:48px;height:2px;background:#7a7a7a"></div>
<div class="t" style="left:673.70px;top:67.76px;font-size:9.5px;line-height:9.5px;letter-spacing:0;transform:scaleX(0.950);transform-origin:0 0;color:#333">0.18 mm</div>
<div class="arr" style="left:713px;top:71px;border-width:3px 3px 0 3px"></div>
<div class="dd" style="left:621px;top:82px;width:102px;height:16px"></div>
<div class="a" style="left:628px;top:89.5px;width:44px;height:1.5px;background:#222"></div>
<div class="t" style="left:673.70px;top:85.56px;font-size:9.5px;line-height:9.5px;letter-spacing:0;transform:scaleX(0.881);transform-origin:0 0;color:#333">JakWa...</div>
<div class="arr" style="left:713px;top:89px;border-width:3px 3px 0 3px"></div>
<div class="btn" style="left:728px;top:64px;width:26px;height:16px"></div>
<svg class="a" style="left:730px;top:65px" width="22" height="14" viewBox="0 0 22 14"><g fill="#9cc8f0" stroke="#1e60a8" stroke-width="0.8"><path d="M2 5l5-3h7l-5 3z"/><path d="M2 8l5-3h7l-5 3z"/><path d="M2 11l5-3h7l-5 3z"/></g><path d="M17 6h3l-1.5 1.5z" fill="#333"/></svg>
<div class="btn" style="left:728px;top:82px;width:19px;height:16px"></div>
<svg class="a" style="left:730px;top:83px" width="16" height="14" viewBox="0 0 16 14"><path d="M3 2h9v9H4a2 2 0 0 1-1-2z" fill="#f0f0f0" stroke="#444" stroke-width="0.8"/><path d="M5 5h5M5 8h5" stroke="#1e60a8" stroke-width="0.8"/></svg>
<div class="dd" style="left:760px;top:64px;width:51px;height:16px;background:#fff"></div>
<div class="a" style="left:762px;top:66px;width:3px;height:12px;background:#aaa"></div>
<div class="t" style="left:763.80px;top:67.76px;font-size:9.5px;line-height:9.5px;letter-spacing:0;transform:scaleX(0.900);transform-origin:0 0;color:#333">Przezrocz...</div>
<div class="dd" style="left:810px;top:64px;width:23px;height:16px;background:#fff"></div>
<div class="t" style="left:819.00px;top:67.76px;font-size:9.5px;line-height:9.5px;letter-spacing:0;color:#444">0</div>

<!-- ===== Narzedzia ===== -->
<svg class="a" style="left:845px;top:51px" width="24" height="16" viewBox="0 0 24 16"><path d="M1 1v6M23 1v6M1 4h22" stroke="#333" stroke-width="0.9" fill="none"/><path d="M1 4l3-1.5v3zM23 4l-3-1.5v3z" fill="#333"/><rect x="1" y="9" width="22" height="5" fill="#e8c040" stroke="#b08a20" stroke-width="0.6"/><path d="M4 9v2M7 9v2M10 9v2M13 9v2M16 9v2M19 9v2" stroke="#8a6a10" stroke-width="0.5"/></svg>
<div class="t" style="left:844.00px;top:74.46px;font-size:9.5px;line-height:9.5px;letter-spacing:0;transform:scaleX(0.955);transform-origin:0 0">Zmierz</div>
<div class="arr" style="left:856px;top:87px;border-width:2px 2px 0 2px"></div>
<div class="btn" style="left:880px;top:45px;width:18px;height:17px"></div>
<div class="btn" style="left:880px;top:63px;width:18px;height:17px"></div>
<div class="btn" style="left:880px;top:81px;width:18px;height:17px"></div>
<svg class="a" style="left:880px;top:45px" width="18" height="53" viewBox="0 0 18 53">
 <rect x="3" y="3" width="8" height="11" fill="#60c060" stroke="#306030" stroke-width="0.8"/><path d="M9 6l4 5-2 0 1 3" stroke="#333" fill="#fff" stroke-width="0.6"/><path d="M12 3l2 2 2-2" stroke="#e0a020"/>
 <circle cx="7" cy="27" r="4" fill="#d0f0d0" stroke="#306030" stroke-width="0.8"/><path d="M9 22h5v4" stroke="#333" fill="none" stroke-width="0.8"/><path d="M11 27l4 4" stroke="#333"/>
 <rect x="4" y="39" width="10" height="12" fill="#e8e8e8" stroke="#555" stroke-width="0.8"/><rect x="6" y="41" width="6" height="3" fill="#aaa"/>
</svg>

<!-- ===== Schowek ===== -->
<svg class="a" style="left:910px;top:45px" width="24" height="26" viewBox="0 0 24 26"><rect x="2" y="4" width="15" height="19" rx="1.5" fill="#9a958e" stroke="#555" stroke-width="0.8"/><rect x="6" y="2" width="7" height="4" rx="1" fill="#ccc" stroke="#555" stroke-width="0.6"/><path d="M9 9h8l4 4v12H9z" fill="#f4f4f4" stroke="#555" stroke-width="0.8"/></svg>
<div class="t" style="left:910.50px;top:74.46px;font-size:9.5px;line-height:9.5px;letter-spacing:0;transform:scaleX(0.948);transform-origin:0 0">Wklej</div>
<div class="arr" style="left:920px;top:87px;border-width:2px 2px 0 2px"></div>
<div class="btn" style="left:941px;top:45px;width:19px;height:17px"></div>
<div class="btn" style="left:941px;top:63px;width:19px;height:17px"></div>
<div class="btn" style="left:941px;top:81px;width:19px;height:17px"></div>
<svg class="a" style="left:941px;top:45px" width="19" height="53" viewBox="0 0 19 53">
 <path d="M5 3l9 10M14 3l-9 10" stroke="#333" stroke-width="1.2"/><circle cx="5" cy="13" r="2" fill="none" stroke="#333"/><circle cx="14" cy="13" r="2" fill="none" stroke="#333"/>
 <rect x="3" y="20" width="8" height="10" fill="#fff" stroke="#555" stroke-width="0.8"/><rect x="7" y="24" width="8" height="10" fill="#f0f0f0" stroke="#555" stroke-width="0.8"/>
 <rect x="3" y="38" width="11" height="11" fill="#fff" stroke="#555" stroke-width="0.8"/><rect x="4" y="39" width="5" height="5" fill="#2a6ab8"/><path d="M10 50l6-6" stroke="#d07020" stroke-width="2.5"/>
</svg>

<div class="a" style="left:9px;top:115px;width:1002px;height:3px;background:#666"></div>
<div class="a" style="left:9px;top:118px;width:1002px;height:2px;background:#888"></div>

<!-- canvas -->
<div class="a" style="left:9px;top:120px;width:1002px;height:336px;background:#000"></div>
<!--PLANE--><svg class="a" style="left:0;top:0" width="1024" height="576" viewBox="0 0 1024 576"><g fill="none" stroke="#e8e8e8" stroke-width="1"><path d="M41.5,345.5 C42.8,344.0 42.4,340.2 49.1,336.3 C55.8,332.4 70.7,326.1 81.5,322.0 C92.3,317.9 100.9,315.0 114.0,311.5 C127.1,308.0 144.4,303.9 160.0,301.0 C175.6,298.1 187.8,295.8 207.3,293.8 C226.8,291.8 256.3,289.6 277.0,289.0 C297.7,288.4 315.1,288.9 331.5,289.9 C347.9,290.8 355.8,292.7 375.5,294.7 C395.2,296.7 409.2,299.5 450.0,301.7 C490.8,303.9 571.2,306.3 620.0,308.1 C668.8,309.9 713.0,311.3 743.0,312.5 C773.0,313.7 781.3,314.7 800.0,315.5 C818.7,316.3 845.8,317.0 855.0,317.3"/><path d="M41.5,345.5 C42.8,346.7 40.4,348.6 49.0,352.5 C57.6,356.4 80.2,365.2 93.0,368.8 C105.8,372.4 114.3,372.6 125.5,374.0 C136.7,375.4 146.4,376.5 160.0,377.4 C173.6,378.3 187.3,379.3 207.3,379.3 C227.3,379.3 251.2,379.5 280.0,377.3 C308.8,375.1 346.6,370.9 380.0,366.2 C413.4,361.5 455.4,353.2 480.4,349.4 C505.4,345.6 506.7,345.3 530.0,343.6 C553.3,341.9 579.5,340.7 620.0,339.1 C660.5,337.5 734.6,335.3 773.0,334.1 C811.4,332.9 826.5,333.5 850.3,331.7 C874.1,329.9 905.0,324.5 916.0,323.1"/><path d="M41.5,345.5 C61.2,344.1 118.6,339.3 160.0,336.9 C201.4,334.5 253.3,332.6 290.0,331.2 C326.7,329.8 345.0,329.8 380.0,328.6 C415.0,327.5 471.2,325.2 500.0,324.3 C528.8,323.4 532.5,323.6 552.5,323.4 C572.5,323.2 585.4,323.0 620.0,323.2 C654.6,323.4 723.8,324.6 760.0,324.8 C796.2,325.1 824.2,324.7 837.0,324.7"/><path d="M81.5,322.0 L115.9,333.5"/><path d="M115.9,333.5 C117.2,333.8 116.2,335.4 123.5,335.4 C130.8,335.4 140.0,334.6 160.0,333.5 C180.0,332.4 229.7,329.5 243.6,328.7"/><path d="M243.6,328.7 L277.0,289.0"/><path d="M278.4,307.5 C279.9,306.7 281.7,303.7 287.6,302.6 C293.5,301.5 305.2,301.0 314.0,300.8 C322.8,300.6 330.1,300.6 340.3,301.3 C350.6,302.0 363.8,303.8 375.5,305.2 C387.2,306.6 400.7,308.3 410.6,309.6 C420.6,310.9 431.1,312.5 435.2,313.1"/><path d="M278.4,307.5 C279.9,308.3 277.3,310.7 287.6,312.2 C297.9,313.7 325.7,315.9 340.3,316.3 C354.9,316.7 359.7,315.0 375.5,314.5 C391.3,314.0 425.2,313.3 435.2,313.1"/><path d="M278.4,307.5 C294.6,308.1 349.4,310.1 375.5,311.0 C401.6,311.9 425.2,312.8 435.2,313.1"/><path d="M741,312.5 C760,312 778,302 794.7,280 L845.4,187.2 C856,168 872,157.4 892.8,157.4"/><path d="M880.0,157.4 L927.8,157.4 L916.0,323.1"/><path d="M776.4,313.7 L797.0,276.0"/><path d="M894.0,157.4 L864.6,280.0 L855.8,316.9"/><path d="M855.8,316.9 L851.5,331 C849,340 842,346.5 830,346.5 C818,346.5 808,341 773,334.1"/><path d="M819.0,295.8 L858.9,295.8"/></g><g fill="none" stroke="#e0e0e0" stroke-width="1"><path d="M103.0,401.5 L154.0,401.5"/><path d="M128.5,375.0 L128.5,428.0"/><rect x="125.5" y="398.5" width="6" height="6"/><path d="M19.5 409v37M19.5 445.5h38"/><rect x="16.5" y="442.5" width="7" height="7"/><path d="M20 396l4.5 5 4.5-5M24.5 401v6"/><path d="M60 436l10 10M70 436l-10 10"/></g></svg><!--/PLANE-->
<!-- layout tabs row -->
<div class="a" style="left:9px;top:456px;width:1002px;height:13px;background:linear-gradient(#fafafa,#f0f0f0 15%,#eeeeee)"></div>
<div class="a" style="left:9px;top:469px;width:1002px;height:3px;background:linear-gradient(#5e5e5e,#8a8a8a)"></div>

<!-- command area -->
<div class="a" style="left:9px;top:472px;width:1003px;height:51px;background:#fff"></div>
<div class="a" style="left:9px;top:472px;width:11px;height:51px;background:#a8a8a8"></div>

<!-- status bar -->
<div class="a" style="left:9px;top:523px;width:1003px;height:16px;background:linear-gradient(#b8b8b8,#a6a6a6)"></div>
<div class="a" style="left:0;top:539px;width:1024px;height:7px;background:#f0f0f0"></div>

<!-- taskbar -->
<div class="a" style="left:0;top:546px;width:1024px;height:30px;background:linear-gradient(90deg,#5f6858,#646a5c 35%,#5f6959 65%,#646a5e 80%,#6a6b66)"></div>
<svg class="a" style="left:0;top:546px" width="1024" height="30" viewBox="0 0 1024 30"><defs><filter id="tx" x="0" y="0" width="100%" height="100%"><feTurbulence type="fractalNoise" baseFrequency="0.08 0.25" numOctaves="3" seed="7"/><feColorMatrix values="0 0 0 0 1  0 0 0 0 1  0 0 0 0 0.95  1.2 0 0 0 -0.55"/></filter></defs><rect width="1024" height="30" filter="url(#tx)" opacity="0.22"/></svg>


<!-- viewport controls -->
<div class="a" style="left:966px;top:130px;width:8px;height:2px;background:#f0f0f0"></div>
<div class="a" style="left:983px;top:127px;width:7px;height:6px;border:1px solid #f0f0f0;border-top-width:2px"></div>
<div class="a" style="left:981px;top:129px;width:7px;height:6px;border:1.5px solid #f0f0f0;background:#000"></div>
<svg class="a" style="left:995px;top:126px" width="9" height="9" viewBox="0 0 9 9"><path d="M1.5 1.5l6 6M7.5 1.5l-6 6" stroke="#f0f0f0" stroke-width="1.6"/></svg>
<!-- viewcube -->
<svg class="a" style="left:940px;top:145px" width="66" height="66" viewBox="0 0 66 66">
 <circle cx="32.2" cy="31.8" r="24.5" fill="none" stroke="#434343" stroke-width="5"/>
 <rect x="20" y="19.5" width="24" height="24" fill="#b2b2b2" stroke="#8a8a8a" stroke-width="0.8"/>
 <text x="32" y="34" font-family="Liberation Sans" font-size="6" font-weight="bold" text-anchor="middle" fill="#555">GÓRA</text>
 <text x="32.2" y="9" font-family="Liberation Sans" font-size="7" font-weight="bold" text-anchor="middle" fill="#f0f0f0">Pn</text>
 <text x="32.2" y="62" font-family="Liberation Sans" font-size="7" font-weight="bold" text-anchor="middle" fill="#f0f0f0">Po</text>
 <text x="5.7" y="34.5" font-family="Liberation Sans" font-size="7" font-weight="bold" text-anchor="middle" fill="#f0f0f0">Z</text>
 <text x="58.5" y="34.5" font-family="Liberation Sans" font-size="7" font-weight="bold" text-anchor="middle" fill="#f0f0f0">W</text>
</svg>
<div class="a" style="left:953px;top:217px;width:37px;height:13px;background:linear-gradient(#b4b6c2,#9a9ca8);border:1px solid #c8c8d0;border-radius:3px"></div>
<div class="t" style="left:956.50px;top:219.38px;font-size:9px;line-height:9px;letter-spacing:0;transform:scaleX(0.827);transform-origin:0 0;color:#5a5a66">GUW</div>
<div class="arr" style="left:979px;top:222px;border-width:2px 2.5px 0 2.5px;border-top-color:#ddd"></div>
<!-- nav bar -->
<div class="a" style="left:985px;top:249px;width:24px;height:158px;background:#404040;border:1px solid #555;border-radius:3px"></div>
<svg class="a" style="left:985px;top:249px" width="24" height="158" viewBox="0 0 24 158">
 <g fill="none" stroke="#6c6c6c" stroke-width="1">
 <path d="M4 5h4M16 5h4"/>
 <path d="M6 15h12v8a6 6 0 0 1-12 0z"/><circle cx="12" cy="23" r="3.5"/>
 <path d="M11 35h2"/>
 <path d="M7 56v-8M10 55v-10M13 55v-10M16 56v-8M6 55q0 6 6 6q6 0 6-6"/>
 <path d="M11 66h2"/>
 <path d="M4 72l8 8M12 72l-8 8"/><circle cx="15" cy="84" r="3"/><path d="M17 86l3 3"/>
 <path d="M11 92h2"/>
 <path d="M12 97v14M5 104h14M9 100l3-3 3 3M9 108l3 3 3-3"/>
 <path d="M11 117h2"/>
 <path d="M5 122h3v3H5zM10.5 122h3v3h-3zM16 122h3v3h-3z"/><rect x="5" y="128" width="13" height="10"/><path d="M10 130l4 3-4 3z"/>
 <path d="M5 152h3M16 152h3"/>
 </g>
</svg>

<!-- layout tabs -->
<svg class="a" style="left:9px;top:456px" width="200" height="13" viewBox="0 0 200 13">
 <g fill="#f4f4f4" stroke="#aaa" stroke-width="0.8"><rect x="1.5" y="0.5" width="11" height="11"/><rect x="12.5" y="0.5" width="11" height="11"/><rect x="23.5" y="0.5" width="11" height="11"/><rect x="34.5" y="0.5" width="11" height="11"/></g>
 <g fill="#777"><path d="M4 3h1v6H4zM6 6l4-3v6z"/><path d="M15 6l4-3v6z"/><path d="M30 6l-4-3v6z"/><path d="M37 3l4 3-4 3zM42 3h1v6h-1z"/></g>
 <path d="M48 0h38l-5 12H52z" fill="#000"/>
 <path d="M86 0L81 12h38l5-12" fill="#fafafa" stroke="#888" stroke-width="0.8"/>
 <path d="M124 0l-5 12h40l5-12" fill="#fafafa" stroke="#888" stroke-width="0.8"/>
</svg>
<div class="t" style="left:63.09px;top:457.54px;font-size:10px;line-height:10px;letter-spacing:0;transform:scaleX(0.812);transform-origin:0 0;color:#f4f4f4">Model</div>
<div class="t" style="left:97.32px;top:457.54px;font-size:10px;line-height:10px;letter-spacing:0;transform:scaleX(0.877);transform-origin:0 0;color:#333">Układ1</div>
<div class="t" style="left:136.79px;top:457.54px;font-size:10px;line-height:10px;letter-spacing:0;transform:scaleX(0.910);transform-origin:0 0;color:#333">Układ2</div>

<!-- command text -->
<div class="a" style="left:9px;top:472px;width:1003px;height:1px;background:#8a8a8a"></div>
<div class="a" style="left:12px;top:475px;width:6px;height:1px;border-top:1px dotted #555"></div>
<div class="t" style="left:21px;top:474.5px;font-family:'Liberation Mono',monospace;letter-spacing:0;color:#333;line-height:11.7px">Polecenie: _pasteclip Określ punkt wstawienia:
Polecenie: Określ przeciwległy narożnik:
Polecenie: _.erase znaleziono 2</div>
<div class="a" style="left:20px;top:508px;width:980px;height:1px;background:#b0b0b0"></div>
<div class="t" style="left:21px;top:512px;font-family:'Liberation Mono',monospace;letter-spacing:0;color:#333">Polecenie:</div>
<div class="a" style="left:1000px;top:472px;width:12px;height:36px;background:#f6f6f6"></div>
<svg class="a" style="left:1000px;top:472px" width="12" height="36" viewBox="0 0 12 36"><path d="M3 10l3-3 3 3M3 28l3 3 3-3" fill="none" stroke="#555" stroke-width="1.2"/></svg>
<div class="a" style="left:954px;top:509px;width:58px;height:14px;background:#f6f6f6"></div>
<div class="a" style="left:963px;top:510px;width:13px;height:12px;background:#d8d8d8"></div>
<svg class="a" style="left:954px;top:509px" width="46" height="14" viewBox="0 0 46 14"><path d="M5 4l-3 3 3 3M38 4l3 3-3 3" fill="none" stroke="#555" stroke-width="1.2"/></svg>




<!-- ===== status bar ===== -->
<div class="a" style="left:9px;top:523px;width:1003px;height:1px;background:#5a5a5a"></div>
<div class="a" style="left:9px;top:524px;width:142px;height:15px;background:linear-gradient(#a0a0a0,#8a8a8a)"></div>
<div class="t" style="left:18.00px;top:526.83px;font-size:10px;line-height:10px;letter-spacing:0;transform:scaleX(0.809);transform-origin:0 0;color:#1e1e1e">3623.8459, 1280.4150, 0.0000</div>
<svg class="a" style="left:151px;top:524px" width="232" height="15" viewBox="0 1 232 15">
 <defs>
  <linearGradient id="sg" x1="0" y1="0" x2="0" y2="1"><stop offset="0" stop-color="#bcbcbc"/><stop offset="1" stop-color="#a6a6a6"/></linearGradient>
  <linearGradient id="sbl" x1="0" y1="0" x2="0" y2="1"><stop offset="0" stop-color="#d8eef6"/><stop offset="1" stop-color="#a8d4e6"/></linearGradient>
 </defs>
 <rect x="0" y="0" width="230" height="16" fill="url(#sg)"/>
 <rect x="82" y="0" width="16.4" height="16" fill="url(#sbl)"/>
 <rect x="115" y="0" width="32.8" height="16" fill="url(#sbl)"/>
 <rect x="180.4" y="0" width="16.4" height="16" fill="url(#sbl)"/>
 <g stroke="#555" stroke-width="1.1">
  <path d="M0.5 0v16M16.9 0v16M33.3 0v16M49.7 0v16M66.1 0v16M82.5 0v16M98.9 0v16M115.3 0v16M131.7 0v16M148.1 0v16M164.5 0v16M180.9 0v16M197.3 0v16M213.7 0v16M230.1 0v16"/>
 </g>
 <!-- snap -->
 <g stroke="#222" fill="none" stroke-width="1.1"><path d="M4 7h9M8.5 3v9"/><rect x="6.5" y="5" width="4" height="4" fill="#444"/></g><rect x="11" y="9.5" width="3.5" height="3.5" fill="#fff" stroke="#333" stroke-width="0.6"/>
 <!-- grid dots -->
 <g fill="#333"><path d="M22 4h1v1h-1zM25 4h1v1h-1zM28 4h1v1h-1zM22 7h1v1h-1zM25 7h1v1h-1zM28 7h1v1h-1z"/><rect x="21" y="11" width="9" height="1.2"/></g>
 <!-- grid -->
 <g stroke="#222" stroke-width="0.9" fill="#f0f0f0"><rect x="36.5" y="2.5" width="11" height="11"/><path d="M39.2 2.5v11M42 2.5v11M44.8 2.5v11M36.5 5.2h11M36.5 8h11M36.5 10.8h11" fill="none"/></g>
 <!-- ortho -->
 <path d="M52.5 2v11.5h11" fill="none" stroke="#333" stroke-width="1"/><rect x="52.5" y="9" width="4" height="4.5" fill="none" stroke="#777" stroke-width="0.6"/>
 <!-- polar -->
 <circle cx="73" cy="9" r="3.8" fill="none" stroke="#333" stroke-width="0.9"/><path d="M73 9l4-5" stroke="#222" stroke-width="1.2"/><circle cx="73" cy="9" r="1.3" fill="#222"/>
 <!-- osnap -->
 <rect x="85" y="3" width="11" height="10.5" fill="#f4f8fa" stroke="#444" stroke-width="1"/><circle cx="85" cy="3" r="1.5" fill="#f07070"/>
 <!-- 3dosnap -->
 <path d="M101 13V7l3-4h8v10z" fill="#e0e0e0" stroke="#444" stroke-width="1"/><circle cx="101.5" cy="13" r="1.5" fill="#f08040"/>
 <!-- otrack -->
 <path d="M119 12.5h9M119 12.5l7-8" stroke="#1a4a6a" stroke-width="1.3"/>
 <!-- ducs -->
 <path d="M134.5 3v10h10M134.5 13l7-7" stroke="#2a5a7a" stroke-width="1.1" fill="none"/><path d="M143 2l1.5 2.5 2.5 0-2 2 1 2.5-3-1.5-3 1.5 1-2.5-2-2 2.5 0z" fill="#f0c830"/>
 <!-- dyn -->
 <path d="M152 8h10M155 5v5M157 10h5v2h-5z" stroke="#222" stroke-width="1.2" fill="#333"/>
 <!-- lwt -->
 <path d="M167 8h12M173 4v9" stroke="#111" stroke-width="1.6"/>
 <!-- tpy -->
 <rect x="183.5" y="2.5" width="11" height="11" fill="#b8d8f4" stroke="#3a6aa8" stroke-width="1"/>
 <!-- qp -->
 <rect x="202" y="4" width="7" height="9" fill="#fff" stroke="#222" stroke-width="1.2"/><path d="M204 7h3M204 9.5h3" stroke="#222" stroke-width="0.8"/>
 <!-- sc -->
 <path d="M216 4h5M218.5 1.5v5" stroke="#222" stroke-width="1"/><path d="M218 6v6h3" fill="none" stroke="#333"/><rect x="221" y="7.5" width="7" height="7" fill="#6ac060" stroke="#3a7a30" stroke-width="0.8"/>
</svg>
<div class="a" style="left:381px;top:524px;width:368px;height:15px;background:linear-gradient(#9c9c9c,#868686)"></div>
<div class="a" style="left:740px;top:524px;width:9px;height:15px;background:#8a8a8a"></div>
<svg class="a" style="left:749px;top:524px" width="264" height="15" viewBox="0 1 264 15">
 <defs><linearGradient id="sg2" x1="0" y1="0" x2="0" y2="1"><stop offset="0" stop-color="#bcbcbc"/><stop offset="1" stop-color="#a6a6a6"/></linearGradient></defs>
 <rect x="0" y="0" width="263" height="16" fill="url(#sg2)"/>
 <rect x="65.5" y="0" width="9" height="16" fill="#9a9a9a"/>
 <rect x="144.6" y="0" width="5" height="16" fill="#9a9a9a"/>
 <rect x="199" y="0.5" width="27" height="15" fill="#a6a6a6" stroke="#6a6a6a" stroke-width="1"/>
 <rect x="204" y="2" width="17" height="12" fill="#9a9a9a"/>
 <g stroke="#555" stroke-width="1.1"><path d="M0.5 0v16M32 0v16M48.4 0v16M65.5 0v16M74.5 0v16M112.7 0v16M128.6 0v16M144.6 0v16M149.4 0v16M166.3 0v16M183 0v16M199 0v16M226.3 0v16M234.3 0v16M250.3 0v16"/></g>
 <!-- layout icons -->
 <rect x="36" y="3" width="9" height="8" fill="#f4f4f4" stroke="#333" stroke-width="0.9"/><path d="M38 5l2 4" stroke="#333"/><rect x="35" y="12" width="11" height="1.5" fill="#444"/>
 <rect x="51" y="3" width="5" height="6" fill="#f4f4f4" stroke="#333" stroke-width="0.9"/><rect x="57" y="3" width="5" height="6" fill="#f4f4f4" stroke="#333" stroke-width="0.9"/><rect x="51" y="11" width="11" height="1.5" fill="#444"/>
 <!-- annotation scale -->
 <path d="M84 3l-1 5-4 5M84 8l4 5" fill="none" stroke="#f8f8f8" stroke-width="1.8"/><path d="M84 3l-1 5-4 5M84 8l4 5" fill="none" stroke="#555" stroke-width="0.5"/>
 <path d="M105 6l3 0-1.5 2z" fill="#111"/>
 <path d="M119 3l-4 10M119 3l4 10M116 9l6 0" fill="none" stroke="#f4f4f4" stroke-width="1.6"/><path d="M119 3l-4 10" stroke="#8a7acc" stroke-width="0.8"/><circle cx="124" cy="10" r="2.5" fill="#f8d840"/>
 <path d="M136 3l-1 5-4 5M136 8l4 5" fill="none" stroke="#c8c8c8" stroke-width="1.6"/>
 <!-- gear -->
 <path d="M161.82,6.71 L163.68,7.31 L163.68,9.69 L161.82,10.29 L161.91,10.07 L162.80,11.82 L161.12,13.50 L159.37,12.61 L159.59,12.52 L158.99,14.38 L156.61,14.38 L156.01,12.52 L156.23,12.61 L154.48,13.50 L152.80,11.82 L153.69,10.07 L153.78,10.29 L151.92,9.69 L151.92,7.31 L153.78,6.71 L153.69,6.93 L152.80,5.18 L154.48,3.50 L156.23,4.39 L156.01,4.48 L156.61,2.62 L158.99,2.62 L159.59,4.48 L159.37,4.39 L161.12,3.50 L162.80,5.18 L161.91,6.93 Z" fill="#f4f4f4" stroke="#2a2a2a" stroke-width="0.9"/><circle cx="157.8" cy="8.5" r="2" fill="#b8b8b8" stroke="#2a2a2a" stroke-width="0.9"/><path d="M162 12h2.5v2.5H162z" fill="#111"/>
 <!-- lock -->
 <rect x="168.5" y="7" width="8" height="6" fill="#f8f8f8" stroke="#222" stroke-width="0.9"/><path d="M172.5 8.5v3" stroke="#222"/><path d="M175 7V5a2.5 2.5 0 0 1 5 0v1.5" fill="none" stroke="#222" stroke-width="1.1"/>
 <!-- isolate -->
 <rect x="185" y="3" width="9" height="7" fill="#bcd0e8" stroke="#333" stroke-width="0.8"/><circle cx="194" cy="10" r="2.5" fill="#f8d840"/><rect x="193" y="12" width="2" height="2" fill="#a08030"/>
 <!-- bulb -->
 <path d="M212.5 3a3.5 3.5 0 0 1 3.5 3.5c0 2-1.5 2.5-1.5 4h-4c0-1.5-1.5-2-1.5-4a3.5 3.5 0 0 1 3.5-3.5z" fill="#f8f0a0" stroke="#777" stroke-width="0.5"/><rect x="211" y="11" width="3" height="3" fill="#f0f0e0"/>
 <path d="M228 6h4l-2 2.5z" fill="#111"/>
 <!-- window -->
 <rect x="237" y="2.5" width="11" height="11" fill="#f4f4f4" stroke="#333" stroke-width="1"/><rect x="237" y="2.5" width="11" height="2.5" fill="#555"/>
 <!-- grip -->
 <g fill="#8a8a8a"><rect x="259" y="5" width="1.5" height="1.5"/><rect x="256" y="8" width="1.5" height="1.5"/><rect x="259" y="8" width="1.5" height="1.5"/><rect x="253" y="11" width="1.5" height="1.5"/><rect x="256" y="11" width="1.5" height="1.5"/><rect x="259" y="11" width="1.5" height="1.5"/></g>
</svg>
<div class="t" style="left:749.89px;top:526.53px;font-size:10px;line-height:10px;letter-spacing:0;transform:scaleX(0.812);transform-origin:0 0;color:#1e1e1e">MODEL</div>
<div class="t" style="left:838.08px;top:526.53px;font-size:10px;line-height:10px;letter-spacing:0;transform:scaleX(0.917);transform-origin:0 0;color:#222">1:1</div>

<!-- ===== taskbar ===== -->
<svg class="a" style="left:0;top:546px" width="1024" height="30" viewBox="0 0 1024 30">
 <defs>
  <linearGradient id="tbb" x1="0" y1="0" x2="0" y2="1"><stop offset="0" stop-color="#fff" stop-opacity=".16"/><stop offset="1" stop-color="#fff" stop-opacity=".10"/></linearGradient>
  <radialGradient id="ff" cx="0.4" cy="0.4" r="0.6"><stop offset="0" stop-color="#ffe040"/><stop offset="0.6" stop-color="#f07020"/><stop offset="1" stop-color="#c03010"/></radialGradient>
  <radialGradient id="tb" cx="0.4" cy="0.4" r="0.6"><stop offset="0" stop-color="#80b0f0"/><stop offset="1" stop-color="#1a4aa0"/></radialGradient>
 </defs>
 <rect x="152" y="1" width="44" height="29" fill="url(#tbb)" stroke="#8a8a80" stroke-opacity=".5"/>
 <rect x="199" y="1" width="38" height="29" fill="url(#tbb)" stroke="#8a8a80" stroke-opacity=".5"/>
 <path d="M239.5 1v29M241.5 1v29" stroke="#9a9a90" stroke-opacity=".6"/>
 <rect x="245" y="1" width="44" height="29" fill="url(#tbb)" stroke="#8a8a80" stroke-opacity=".5"/>
 <!-- IE -->
 <path d="M27 15.5h16.5a8.3 8.3 0 1 0-2.3 5.8" fill="none" stroke="#3cb4ec" stroke-width="3.6"/>
 <path d="M45.5 4.5c-4-2-13 2-17.5 8.5c-4 6-5 10-3.5 11.5c1 1 3 0 5-1.5c-2 1-3.5 1-3.8 0c-.5-2 2-7 6-11c4.5-4.5 10-7 12.5-6c1 .5 1 2 0 4c1.5-2 2.5-4.5 1.3-5.5z" fill="#f2c018"/>
 <!-- explorer -->
 <path d="M69 8h8l2 2h14v16H69z" fill="#e8c460" stroke="#c09838" stroke-width="0.6"/>
 <rect x="70" y="12" width="22" height="14" fill="#f8e4a0"/>
 <rect x="70" y="12" width="22" height="3" fill="#fff4c8"/>
 <path d="M75 17h12v9H75z" fill="#4aa0dc"/><path d="M77 20h8v3h-8z" fill="#f8e4a0"/>
 <circle cx="73" cy="8.5" r="1" fill="#3a8a3a"/><circle cx="79" cy="9.5" r="1" fill="#c03030"/>
 <!-- app3 -->
 <circle cx="127.5" cy="15" r="9.5" fill="#e03a30"/>
 <path d="M127.5 5.5a9.5 9.5 0 0 1 9.5 9.5 9.5 9.5 0 0 1-9.5 9.5z" fill="#2a6ad0"/>
 <path d="M120 9a9.5 9.5 0 0 0-2 8h6z" fill="#f8a020"/>
 <circle cx="130" cy="14" r="4.5" fill="#90d040"/>
 <path d="M118.5 20l5 5 1-5z" fill="#f4f4f4"/><path d="M120 12a8 8 0 0 0 2 9" fill="none" stroke="#f8d030" stroke-width="2"/>
 <!-- firefox -->
 <circle cx="174" cy="14.5" r="10.5" fill="#f07820"/>
 <circle cx="176" cy="12.5" r="8" fill="#2a68c0"/>
 <circle cx="175" cy="12" r="5" fill="#40a0e8"/>
 <path d="M163.5 13c0 7 5 11.5 10.5 11.5c6 0 10-4.5 10.5-10c-1.5 4.5-5.5 7-10 7c-5 0-8-3.5-8-8c0-2 1-4 2.5-5c-3 0-5.5 2.5-5.5 4.5z" fill="#f06a18"/>
 <path d="M166 8c1.5-3 4-4.5 6-4.5c-2 1-3.5 3-3.5 5z" fill="#f8a030"/>
 <path d="M183 18a10.5 10.5 0 0 1-4 5.5" stroke="#f8c030" stroke-width="2" fill="none"/>
 <!-- autocad -->
 <rect x="205.5" y="5.5" width="23.5" height="20" fill="#e8e8e8"/>
 <path d="M222 5.5h7v6z" fill="#f8f8f8"/>
 <rect x="219.5" y="20" width="9.5" height="5.5" fill="#111"/>
 <path d="M214 25.5h6v-5z" fill="#777"/>
 <path d="M208 20l6.5-17h3l6.5 14.5z" fill="#e02828"/>
 <path d="M214.5 3l3 0-2 8z" fill="#ff6a6a"/>
 <path d="M208 20l6-2.5 10 0-4 3z" fill="#a01010"/>
 <!-- thunderbird -->
 <circle cx="267.5" cy="14.5" r="10.5" fill="#2a5ab8"/>
 <path d="M257.5 12a10.5 10.5 0 0 1 17-7c-4-1-9 0-12 3z" fill="#5a9ae8"/>
 <path d="M259.5 14c2-3 7-5 11-4c3 .5 4.5 2.5 4.5 5c0 3-3 6-8 6.5c-4 .5-7-1-7.5-3z" fill="#f4f4f4"/>
 <path d="M260 15l7 3 8-4" fill="none" stroke="#b8c0d0" stroke-width="0.8"/>
 <!-- tray -->
 <path d="M866.5 18.5l2.5-2.5 2.5 2.5z" fill="#e8e8e8"/>
 <path d="M882 9v13" stroke="#eeeeee" stroke-width="1.2"/><path d="M882.6 9.5h4.5l.8 1.5h3.5l-1.5 2 1.5 2h-4l-.8-1.5h-4z" fill="#eeeeee"/>
 <rect x="905.5" y="9.5" width="5.5" height="11" fill="none" stroke="#eeeeee" stroke-width="1"/><rect x="907" y="12" width="2.5" height="7.5" fill="#eeeeee"/><path d="M900 14.5h3.5v2H900zM901.5 11v3.5" stroke="#eeeeee" stroke-width="1"/>
 <path d="M918 13h2.5l3.5-3.5v11l-3.5-3.5H918z" fill="#eeeeee"/><path d="M926 12.5a3 3 0 0 1 0 5M928 11a5.5 5.5 0 0 1 0 8" fill="none" stroke="#dddddd" stroke-width="0.9"/>
 <g fill="#e8e8e8"><rect x="936" y="18.5" width="1.6" height="2.5"/><rect x="938.6" y="16.5" width="1.6" height="4.5"/><rect x="941.2" y="14" width="1.6" height="7"/><rect x="943.8" y="11.5" width="1.6" height="9.5"/><rect x="946.4" y="9.5" width="1" height="11.5" opacity=".6"/></g>
</svg>
<div class="t" style="left:972.14px;top:551.03px;font-size:10px;line-height:10px;letter-spacing:0;transform:scaleX(0.858);transform-origin:0 0;color:#f4f4f4">19:16</div>
<div class="t" style="left:960.40px;top:563.74px;font-size:10px;line-height:10px;letter-spacing:0;transform:scaleX(0.845);transform-origin:0 0;color:#f4f4f4">2014-07-01</div>

</body></html>
